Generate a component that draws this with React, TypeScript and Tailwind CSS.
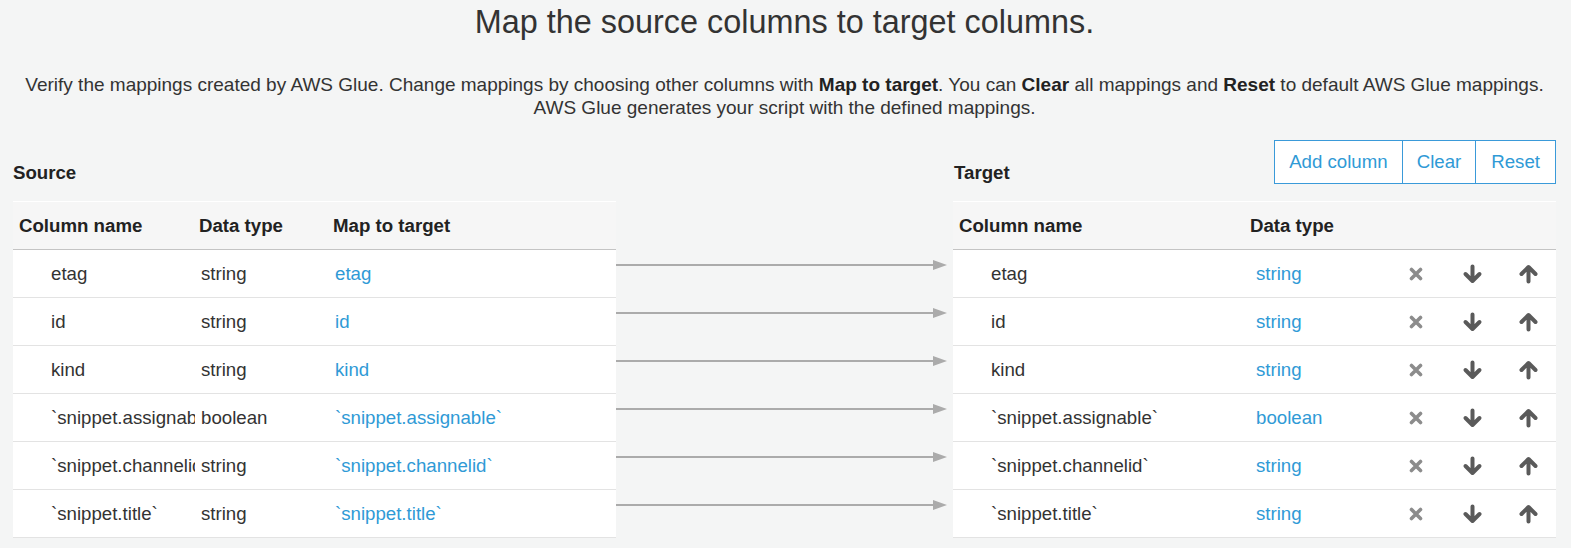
import React from "react";

const rows = [
  { name: "etag", type: "string" },
  { name: "id", type: "string" },
  { name: "kind", type: "string" },
  { name: "`snippet.assignable`", type: "boolean" },
  { name: "`snippet.channelid`", type: "string" },
  { name: "`snippet.title`", type: "string" },
];

function Arrow() {
  return (
    <svg width="331" height="12" viewBox="0 0 331 12" className="block">
      <line x1="0" y1="6" x2="320" y2="6" stroke="#ababab" strokeWidth="2.2" />
      <polygon points="317,1 331,6 317,11" fill="#ababab" />
    </svg>
  );
}

function XIcon() {
  return (
    <svg width="14" height="14" viewBox="0 0 14 14" className="block">
      <path d="M2.5 2.5 L11.5 11.5 M11.5 2.5 L2.5 11.5" stroke="#8c8c8c" strokeWidth="3.6" strokeLinecap="round" />
    </svg>
  );
}

function DownIcon() {
  return (
    <svg width="21" height="20" viewBox="0 0 21 20" className="block">
      <path
        d="M10.5 2.5 L10.5 16.5 M3.5 10 L10.5 17 L17.5 10"
        stroke="#5a5a5a"
        strokeWidth="4"
        strokeLinecap="round"
        strokeLinejoin="round"
        fill="none"
      />
    </svg>
  );
}

function UpIcon() {
  return (
    <svg width="21" height="20" viewBox="0 0 21 20" className="block">
      <path
        d="M10.5 17.5 L10.5 3.5 M3.5 10 L10.5 3 L17.5 10"
        stroke="#5a5a5a"
        strokeWidth="4"
        strokeLinecap="round"
        strokeLinejoin="round"
        fill="none"
      />
    </svg>
  );
}

export default function App() {
  return (
    <div
      className="min-h-[548px] w-full bg-[#f4f5f5] text-[#333] text-[18.67px] pl-[13px] pr-[15px]"
      style={{ fontFamily: '"Liberation Sans", Arial, sans-serif' }}
    >
      <h1 className="pt-[2px] text-center text-[32.4px] leading-[40px] font-normal text-[#333]">
        Map the source columns to target columns.
      </h1>
      <p className="mt-[31px] text-center text-[19px] leading-[23px] text-[#333] whitespace-nowrap">
        Verify the mappings created by AWS Glue. Change mappings by choosing other columns with{" "}
        <b className="text-[#222]">Map to target</b>. You can <b className="text-[#222]">Clear</b> all mappings and{" "}
        <b className="text-[#222]">Reset</b> to default AWS Glue mappings.
        <br />
        AWS Glue generates your script with the defined mappings.
      </p>

      <div className="mt-[21px] flex">
        {/* Source */}
        <div className="w-[603px] shrink-0">
          <div className="h-[44px] flex items-end">
            <span className="font-bold text-[#222] leading-[22px]">Source</span>
          </div>
          <div className="mt-[17px]">
            <div className="grid grid-cols-[182px_132px_1fr] h-[49px] items-center border-t border-t-white border-b border-b-[#c4c4c4] bg-[#f6f6f6] font-bold text-[#222]">
              <div className="pl-[6px] pt-[1px]">Column name</div>
              <div className="pl-[4px] pt-[1px]">Data type</div>
              <div className="pl-[6px] pt-[1px]">Map to target</div>
            </div>
            {rows.map((r) => (
              <div
                key={r.name}
                className="grid grid-cols-[182px_132px_1fr] h-[48px] items-center bg-white border-b border-b-[#e3e3e3]"
              >
                <div className="pl-[38px] overflow-hidden whitespace-nowrap">{r.name}</div>
                <div className="pl-[6px] whitespace-nowrap">{r.type}</div>
                <div className="pl-[8px] text-[#2f9ad6] whitespace-nowrap">{r.name}</div>
              </div>
            ))}
          </div>
        </div>

        {/* Arrows */}
        <div className="w-[337px] shrink-0">
          <div className="h-[44px]" />
          <div className="mt-[17px]">
            <div className="h-[49px]" />
            {rows.map((r) => (
              <div key={r.name} className="h-[48px] pt-[9px]">
                <Arrow />
              </div>
            ))}
          </div>
        </div>

        {/* Target */}
        <div className="w-[603px] shrink-0">
          <div className="h-[44px] flex items-end justify-between">
            <span className="font-bold text-[#222] leading-[22px] pl-[1px]">Target</span>
            <div className="flex h-[44px]">
              <button className="h-[44px] px-[14px] border border-[#3a9ad9] bg-white text-[#2f9ad6] leading-[22px]">
                Add column
              </button>
              <button className="-ml-px h-[44px] px-[14px] border border-[#3a9ad9] bg-white text-[#2f9ad6] leading-[22px]">
                Clear
              </button>
              <button className="-ml-px h-[44px] px-[15px] border border-[#3a9ad9] bg-white text-[#2f9ad6] leading-[22px]">
                Reset
              </button>
            </div>
          </div>
          <div className="mt-[17px]">
            <div className="grid grid-cols-[288px_147px_56px_56px_56px] h-[49px] items-center border-t border-t-white border-b border-b-[#c4c4c4] bg-[#f6f6f6] font-bold text-[#222]">
              <div className="pl-[6px] pt-[1px]">Column name</div>
              <div className="pl-[9px] pt-[1px]">Data type</div>
              <div />
              <div />
              <div />
            </div>
            {rows.map((r) => (
              <div
                key={r.name}
                className="grid grid-cols-[288px_147px_56px_56px_56px] h-[48px] items-center bg-white border-b border-b-[#e3e3e3]"
              >
                <div className="pl-[38px] whitespace-nowrap overflow-hidden">{r.name}</div>
                <div className="pl-[15px] text-[#2f9ad6]">{r.type}</div>
                <div className="flex justify-center">
                  <XIcon />
                </div>
                <div className="flex justify-center">
                  <DownIcon />
                </div>
                <div className="flex justify-center">
                  <UpIcon />
                </div>
              </div>
            ))}
          </div>
        </div>
      </div>
    </div>
  );
}
